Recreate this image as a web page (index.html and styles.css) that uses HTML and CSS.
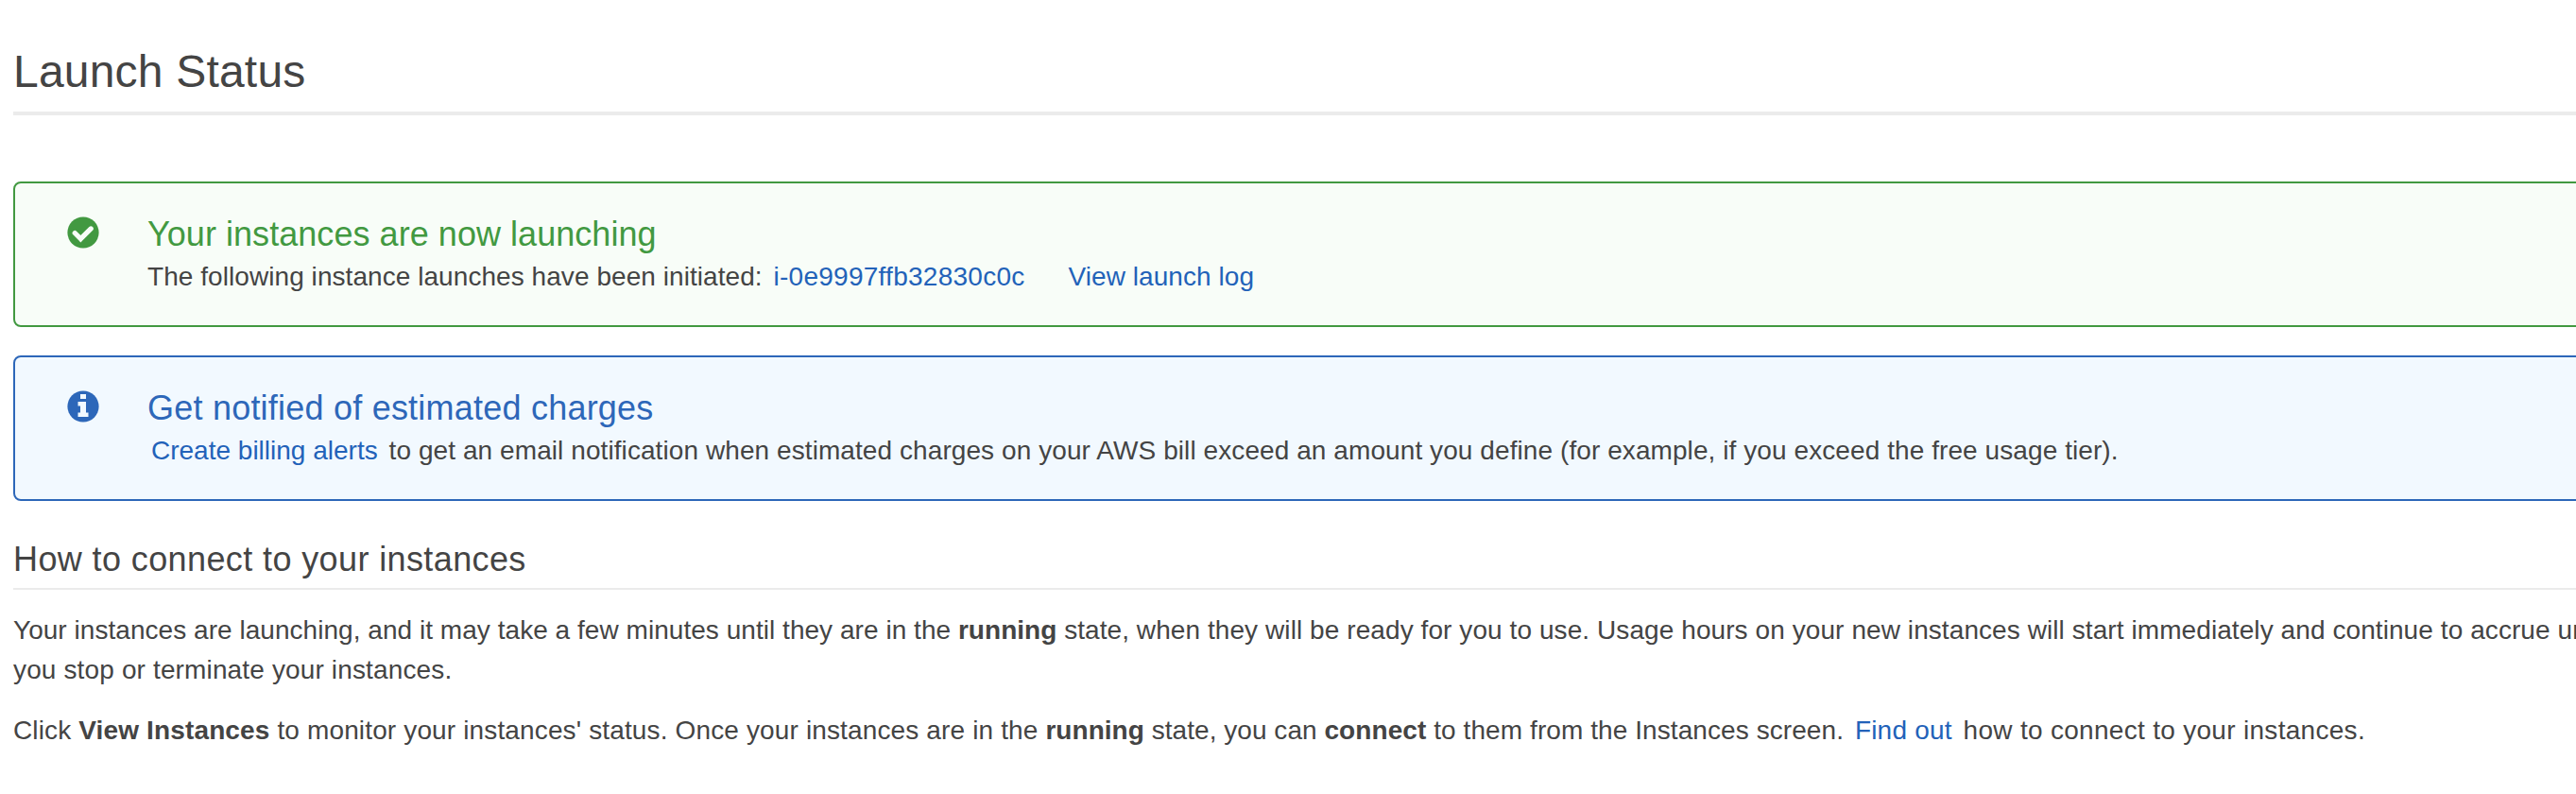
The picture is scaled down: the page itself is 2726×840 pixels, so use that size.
FILE: index.html
```html
<!DOCTYPE html>
<html lang="en">
<head>
<meta charset="utf-8">
<title>Launch Status</title>
<link rel="stylesheet" href="styles.css">
</head>
<body>
<main class="page">
  <h1 class="page-title">Launch Status</h1>
  <section class="alert alert-success">
    <svg class="alert-icon" viewBox="0 0 34 34" aria-hidden="true">
      <circle cx="17" cy="17" r="16.6" fill="currentColor"/>
      <path d="M8.200 17.500 14.400 23.700 25.200 12.900" fill="none" stroke="#f8fdf8" stroke-width="5.200" stroke-linecap="round"/>
    </svg>
    <div class="alert-body">
      <h2 class="alert-title launching">Your instances are now launching</h2>
      <p class="alert-text initiated">The following instance launches have been initiated: <a class="link instance">i-0e9997ffb32830c0c</a><a class="link log">View launch log</a></p>
    </div>
  </section>
  <section class="alert alert-info">
    <svg class="alert-icon" viewBox="0 0 34 34" aria-hidden="true">
      <circle cx="17" cy="17" r="16.6" fill="currentColor"/>
      <path d="M14 4h6v5h-6zM11.500 12H20v11.500h2.500V28h-11v-4.500H14v-7h-2.500z" fill="#f2f9ff"/>
    </svg>
    <div class="alert-body">
      <h2 class="alert-title charges">Get notified of estimated charges</h2>
      <p class="alert-text"><a class="link billing">Create billing alerts</a> to get an email notification when estimated charges on your AWS bill exceed an amount you define (for example, if you exceed the free usage tier).</p>
    </div>
  </section>
  <h2 class="section-title">How to connect to your instances</h2>
  <p class="copy"><span class="snug">Your instances are launching, and it may take a few minutes until they are in the <b>running</b> state,</span> when they will be ready for you to use. Usage hours on your new instances will start immediately and continue to accrue until<br><span class="wide">you stop or terminate your instances.</span></p>
  <p class="copy"><span class="wide">Click <b>View Instances</b> to monitor your instances' status. Once your instances are in the </span><b class="snug">running</b><span class="snug"> state, you can </span><b>connect</b> to them from the Instances screen. <a class="link find">Find out</a> <span class="wider">how to connect to your instances.</span></p>
</main>
</body>
</html>
```
FILE: styles.css
```css
body {
  margin: 0;
  overflow: hidden;
  background: #fff;
  color: #444;
  font: 28px/42px "Liberation Sans", Arial, sans-serif;
  letter-spacing: 0.08px;
}
.page {
  width: 2780px;
  padding: 46px 0 0 14px;
  white-space: nowrap;
}
h1, h2, p { margin: 0; font-weight: 400; }
.page-title {
  height: 72px;
  margin-bottom: 70px;
  border-bottom: 4px solid #ebebeb;
  font-size: 48px;
  line-height: 60px;
  letter-spacing: 0.2px;
}
.alert {
  display: flex;
  gap: 51px;
  box-sizing: border-box;
  height: 154px;
  margin-bottom: 30px;
  padding: 35px 55px;
  border: 2px solid currentColor;
  border-radius: 8px;
}
.alert-success { color: #429941; background: #f8fdf8; }
.alert-info { color: #2d67b9; background: #f2f9ff; }
.alert-icon { flex: none; width: 34px; height: 34px; }
.alert-title { padding-top: 1px; font-size: 36px; line-height: 36px; }
.launching { letter-spacing: 0.05px; }
.charges { letter-spacing: 0.22px; }
.alert-text { margin-top: 6px; color: #444; }
.initiated { letter-spacing: 0.06px; }
.link { padding: 0 4px; color: #2262b9; }
.instance { letter-spacing: 0.26px; }
.billing { letter-spacing: 0; }
.find { letter-spacing: 0.2px; }
.log { margin-left: 38px; }
.section-title {
  height: 45px;
  margin-top: 47px;
  margin-bottom: 14px;
  border-bottom: 2px solid #ebebeb;
  font-size: 36px;
  line-height: 30px;
  letter-spacing: 0.39px;
}
.copy { margin: 0 0 22px; padding-top: 8px; }
.copy + .copy { padding-top: 0; }
.snug { letter-spacing: 0.04px; }
.wide { letter-spacing: 0.14px; }
.wider { letter-spacing: 0.3px; }
```
